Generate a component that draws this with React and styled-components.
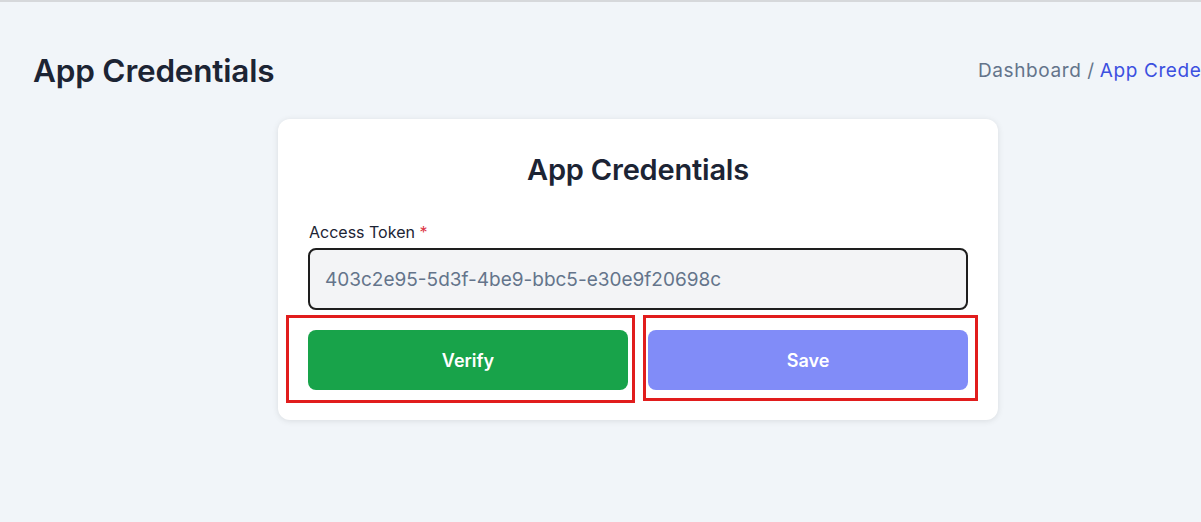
import React from 'react';
import styled, { createGlobalStyle } from 'styled-components';

const GlobalStyle = createGlobalStyle`
  html, body {
    margin: 0;
    padding: 0;
    background: #f1f5f9;
    font-family: Inter, "Noto Sans", sans-serif;
    color: #1c2434;
    overflow: hidden;
  }
`;

const Page = styled.div`
  width: 1201px;
  height: 522px;
  box-sizing: border-box;
  border-top: 2px solid #d6d8db;
  padding: 0 0 0 33px;
  overflow: hidden;
`;

const Header = styled.div`
  display: flex;
  justify-content: space-between;
  align-items: center;
  box-sizing: border-box;
  height: 117px;
  padding-top: 20px;
  white-space: nowrap;
`;

const Heading = styled.h1`
  margin: 0;
  font-size: 31.5px;
  font-weight: 600;
  letter-spacing: -0.2px;
  color: #1c2434;
`;

const Breadcrumb = styled.nav`
  display: flex;
  gap: 5px;
  font-size: 19px;
  font-weight: 400;
  letter-spacing: 0.6px;
  width: 223px;
  overflow: hidden;
`;

const Crumb = styled.span`
  color: ${p => (p.$active ? '#3c50e0' : '#64748b')};
`;

const Card = styled.div`
  width: 720px;
  margin-left: 245px;
  box-sizing: border-box;
  padding: 33px 30px 30px;
  background: #fff;
  border-radius: 12px;
  box-shadow: 0 1px 6px rgba(0, 0, 0, 0.1);
`;

const CardTitle = styled.h2`
  margin: 0 0 35px;
  text-align: center;
  font-size: 29px;
  font-weight: 600;
  letter-spacing: -0.2px;
  color: #1c2434;
`;

const Label = styled.label`
  display: block;
  font-size: 16px;
  color: #1c2434;
  margin-bottom: 6px;
  margin-left: 1px;
`;

const Required = styled.span`
  color: #dc3545;
`;

const Input = styled.input`
  display: block;
  width: 100%;
  height: 62px;
  box-sizing: border-box;
  border: 2px solid #1e1e1e;
  border-radius: 8px;
  background: #f3f4f6;
  padding: 0 15px;
  font-family: inherit;
  font-size: 19px;
  color: #64748b;
  outline: none;
`;

const Actions = styled.div`
  display: grid;
  grid-template-columns: 1fr 1fr;
  gap: 20px;
  margin-top: 20px;
`;

const Button = styled.button`
  position: relative;
  height: 60px;
  border: none;
  border-radius: 8px;
  background: ${p => p.$bg};
  color: #fff;
  font-family: inherit;
  font-size: 18px;
  font-weight: 600;
  cursor: pointer;

  &::after {
    content: '';
    position: absolute;
    top: -15px;
    bottom: ${p => p.$mark[2]}px;
    left: ${p => p.$mark[3]}px;
    right: ${p => p.$mark[1]}px;
    border: 3px solid #e11d1d;
    pointer-events: none;
  }
`;

export default function App() {
  return (
    <>
      <GlobalStyle />
      <Page>
        <Header>
          <Heading>App Credentials</Heading>
          <Breadcrumb>
            <Crumb>Dashboard /</Crumb>
            <Crumb $active>App Credentials</Crumb>
          </Breadcrumb>
        </Header>
        <Card>
          <CardTitle>App Credentials</CardTitle>
          <Label>
            Access Token <Required>*</Required>
          </Label>
          <Input readOnly value="403c2e95-5d3f-4be9-bbc5-e30e9f20698c" />
          <Actions>
            <Button $bg="#18a34a" $mark={[-15, -7, -13, -22]}>Verify</Button>
            <Button $bg="#818cf8" $mark={[-15, -10, -11, -5]}>Save</Button>
          </Actions>
        </Card>
      </Page>
    </>
  );
}
